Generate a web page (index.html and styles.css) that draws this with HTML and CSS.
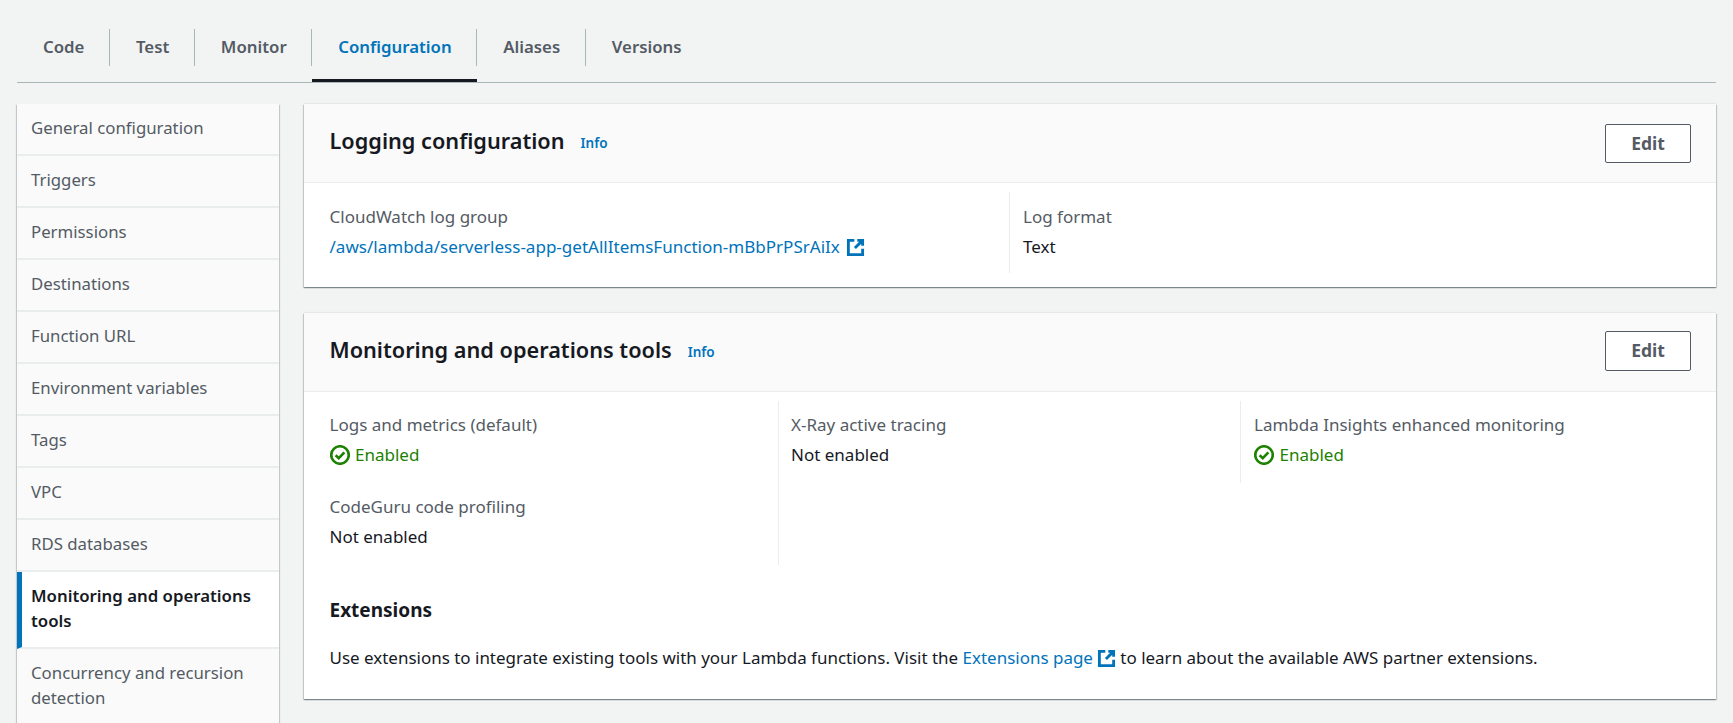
FILE: index.html
```html
<!DOCTYPE html>
<html lang="en">

<head>
    <meta charset="UTF-8">
    <title>Configuration</title>
    <link rel="stylesheet" href="styles.css">
</head>

<body>
    <div class="tabs">
        <a class="tab" href="#"><span>Code</span></a>
        <a class="tab" href="#"><span>Test</span></a>
        <a class="tab" href="#"><span>Monitor</span></a>
        <a class="tab active" href="#"><span>Configuration</span></a>
        <a class="tab" href="#"><span>Aliases</span></a>
        <a class="tab last" href="#"><span>Versions</span></a>
    </div>

    <div class="layout">
        <ul class="side">
            <li>General configuration</li>
            <li>Triggers</li>
            <li>Permissions</li>
            <li>Destinations</li>
            <li>Function URL</li>
            <li>Environment variables</li>
            <li>Tags</li>
            <li>VPC</li>
            <li>RDS databases</li>
            <li class="active">Monitoring and operations tools</li>
            <li>Concurrency and recursion detection</li>
        </ul>

        <div class="main">
            <div class="card card-log">
                <div class="card-head">
                    <h2>Logging configuration</h2>
                    <a class="info" href="#">Info</a>
                    <button class="edit">Edit</button>
                </div>
                <div class="card-body log-body">
                    <div class="col col-log">
                        <div class="label">CloudWatch log group</div>
                        <div class="value"><a href="#">/aws/lambda/serverless-app-getAllItemsFunction-mBbPrPSrAiIx<svg class="ext" viewBox="0 0 16 16"><path d="M7 2H2v12h12V9M9.500 2H14v4.500M14 2L7.500 8.500"/></svg></a></div>
                    </div>
                    <div class="col">
                        <div class="label">Log format</div>
                        <div class="value">Text</div>
                    </div>
                </div>
            </div>

            <div class="card">
                <div class="card-head">
                    <h2>Monitoring and operations tools</h2>
                    <a class="info" href="#">Info</a>
                    <button class="edit">Edit</button>
                </div>
                <div class="card-body tools">
                    <div class="col">
                        <div class="label">Logs and metrics (default)</div>
                        <div class="value ok"><svg class="check" viewBox="0 0 16 16"><circle cx="8" cy="8" r="7"/><path d="M4.500 8.200L7 10.600l4.500-4.700"/></svg>Enabled</div>
                        <div class="label second">CodeGuru code profiling</div>
                        <div class="value">Not enabled</div>
                    </div>
                    <div class="col">
                        <div class="label">X-Ray active tracing</div>
                        <div class="value">Not enabled</div>
                    </div>
                    <div class="col">
                        <div class="label">Lambda Insights enhanced monitoring</div>
                        <div class="value ok"><svg class="check" viewBox="0 0 16 16"><circle cx="8" cy="8" r="7"/><path d="M4.500 8.200L7 10.600l4.500-4.700"/></svg>Enabled</div>
                    </div>
                </div>
                <div class="ext-block">
                    <h3>Extensions</h3>
                    <p>Use extensions to integrate existing tools with your Lambda functions. Visit the <a href="#">Extensions page<svg class="ext" viewBox="0 0 16 16"><path d="M7 2H2v12h12V9M9.500 2H14v4.500M14 2L7.500 8.500"/></svg></a> to learn about the available AWS partner extensions.</p>
                </div>
            </div>
        </div>
    </div>
</body>

</html>
```

FILE: styles.css
```css
* {
    padding: 0;
    margin: 0;
    box-sizing: border-box;
}
html, body {
    height: 100%;
    overflow: hidden;
}
body {
    background: #f2f3f3;
    color: #16191f;
    font-family: "Noto Sans", "Open Sans", sans-serif;
    font-size: 17px;
    padding: 0 17px;
}
a {
    color: #0073bb;
    text-decoration: none;
}
li {
    list-style: none;
}

.tabs {
    display: flex;
    height: 83px;
    padding-top: 29px;
    border-bottom: 1px solid #aab7b8;
}
.tab {
    height: 53px;
    color: #545b64;
    font-weight: 600;
    font-size: 16.800px;
}
.tab span {
    display: flex;
    align-items: center;
    height: 37px;
    padding: 0 24.600px 3px 26px;
    border-right: 1px solid #aab7b8;
}
.tab.last span {
    border-right: 0;
}
.tab.active {
    color: #0073bb;
    border-bottom: 3px solid #16191f;
}

.layout {
    display: flex;
    gap: 25px;
    padding-top: 21px;
}
.side {
    width: 262px;
    flex: none;
    background: #fafafa;
    box-shadow: 0 1px 1px 0 rgba(0, 28, 36, .3), 1px 1px 1px 0 rgba(0, 28, 36, .15), -1px 1px 1px 0 rgba(0, 28, 36, .15);
    color: #545b64;
    font-size: 16.800px;
    line-height: 25px;
}
.side li {
    padding: 11px 14px 14px 14px;
    border-bottom: 2px solid #eaeded;
}
.side li.active {
    background: #fff;
    color: #16191f;
    font-weight: 600;
    border-left: 5px solid #0073bb;
    padding: 11px 14px 14px 9px;
}

.main {
    flex: 1;
    display: flex;
    flex-direction: column;
    gap: 26px;
}
.card {
    background: #fff;
    box-shadow: 0 1px 1px 0 rgba(0, 28, 36, .3), 1px 1px 1px 0 rgba(0, 28, 36, .15), -1px 1px 1px 0 rgba(0, 28, 36, .15), 0 -1px 1px 0 rgba(0, 28, 36, .05);
}
.card-head {
    display: flex;
    align-items: center;
    height: 79px;
    padding: 0 25px 0 25.500px;
    background: #fafafa;
    border-bottom: 1px solid #eaeded;
}
.card-head h2 {
    font-size: 21.700px;
    font-weight: 600;
    color: #16191f;
    padding-bottom: 5px;
}
.info {
    font-size: 13.500px;
    font-weight: 600;
    margin-left: 16px;
}
.edit {
    margin-left: auto;
    width: 86px;
    height: 40px;
    margin-bottom: 2px;
    background: #fff;
    border: 1px solid #545b64;
    border-radius: 2px;
    color: #545b64;
    font-family: inherit;
    font-size: 17.500px;
    font-weight: 700;
    padding-bottom: 2px;
}
.card-log .edit {
    height: 39px;
    margin-top: 1px;
    margin-bottom: 0;
}

.card-body {
    display: grid;
    padding: 9px 0 0 0;
}
.log-body {
    grid-template-columns: 706px 1fr;
    height: 104px;
}
.col {
    padding: 0 13px 0 25.500px;
}
.col-log {
    border-right: 1px solid #eaeded;
    height: 81px;
}
.log-body .label {
    padding-top: 10px;
}
.log-body .col + .col {
    padding-left: 13px;
}
.col-log a {
    font-size: 17.050px;
}
.label {
    color: #545b64;
    line-height: 30px;
    padding-top: 9px;
}
.value {
    line-height: 30px;
}
.second {
    padding-top: 22px;
}
.ok {
    color: #1d8102;
    display: flex;
    align-items: center;
}
.check {
    width: 20px;
    height: 20px;
    margin-right: 5.500px;
    fill: none;
    stroke: #1d8102;
    stroke-width: 2.100;
}
.ext {
    width: 19px;
    height: 19px;
    margin-left: 6px;
    vertical-align: -4px;
    fill: none;
    stroke: #0073bb;
    stroke-width: 2.400;
}

.tools {
    grid-template-columns: 475px 462px 1fr;
    height: 173px;
}
.tools .col {
    height: 164px;
    border-right: 1px solid #eaeded;
}
.tools .col:nth-child(2) {
    height: 82px;
    padding-left: 12px;
}
.tools .col:nth-child(3) {
    border-right: 0;
    padding-left: 13px;
}
.ext-block {
    padding: 33px 25px 0 25.500px;
    height: 134px;
}
.ext-block h3 {
    font-size: 19px;
    font-weight: 700;
    line-height: 24px;
}
.ext-block p {
    margin-top: 24px;
    font-size: 16.980px;
    line-height: 24px;
}
.ext-block .ext {
    margin-left: 4px;
}
```
